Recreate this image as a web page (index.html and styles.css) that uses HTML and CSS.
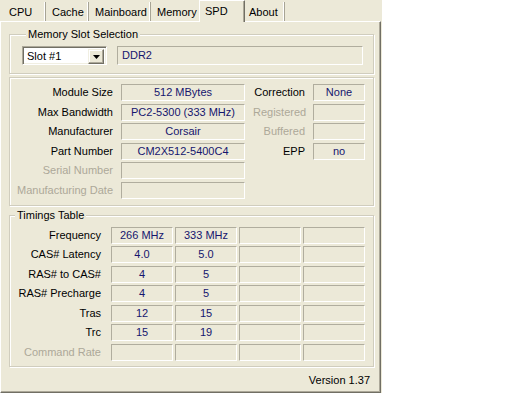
FILE: index.html
```html
<!DOCTYPE html>
<html>
<head>
<meta charset="utf-8">
<link rel="stylesheet" href="styles.css">
</head>
<body>
<div class="window">
  <div class="tabs">
    <div class="tab t-cpu">CPU</div>
    <div class="tab t-cache">Cache</div>
    <div class="tab t-main">Mainboard</div>
    <div class="tab t-mem">Memory</div>
    <div class="tab active t-spd">SPD</div>
    <div class="tab t-about">About</div>
  </div>
  <div class="panel">
    <fieldset class="group g-slot">
      <legend>Memory Slot Selection</legend>
      <div class="slot-row">
        <div class="combo">
          <span class="combo-text">Slot #1</span>
          <span class="combo-btn"><svg width="7" height="4" viewBox="0 0 7 4"><path d="M0 0H7L3.5 4Z" fill="#000"/></svg></span>
        </div>
        <div class="box type">DDR2</div>
      </div>
    </fieldset>

    <div class="group g-module">
      <div class="module-grid">
        <div class="lbl">Module Size</div><div class="box">512 MBytes</div>
        <div class="lbl">Correction</div><div class="box">None</div>

        <div class="lbl">Max Bandwidth</div><div class="box">PC2-5300 (333 MHz)</div>
        <div class="lbl dis">Registered</div><div class="box"></div>

        <div class="lbl">Manufacturer</div><div class="box">Corsair</div>
        <div class="lbl dis">Buffered</div><div class="box"></div>

        <div class="lbl">Part Number</div><div class="box">CM2X512-5400C4</div>
        <div class="lbl">EPP</div><div class="box">no</div>

        <div class="lbl dis">Serial Number</div><div class="box"></div>
        <div></div><div></div>

        <div class="lbl dis">Manufacturing Date</div><div class="box"></div>
        <div></div><div></div>
      </div>
    </div>

    <fieldset class="group g-timings">
      <legend>Timings Table</legend>
      <div class="timing-grid">
        <div class="lbl">Frequency</div><div class="box">266 MHz</div><div class="box">333 MHz</div><div class="box"></div><div class="box"></div>
        <div class="lbl">CAS# Latency</div><div class="box">4.0</div><div class="box">5.0</div><div class="box"></div><div class="box"></div>
        <div class="lbl">RAS# to CAS#</div><div class="box">4</div><div class="box">5</div><div class="box"></div><div class="box"></div>
        <div class="lbl">RAS# Precharge</div><div class="box">4</div><div class="box">5</div><div class="box"></div><div class="box"></div>
        <div class="lbl">Tras</div><div class="box">12</div><div class="box">15</div><div class="box"></div><div class="box"></div>
        <div class="lbl">Trc</div><div class="box">15</div><div class="box">19</div><div class="box"></div><div class="box"></div>
        <div class="lbl dis">Command Rate</div><div class="box"></div><div class="box"></div><div class="box"></div><div class="box"></div>
      </div>
    </fieldset>

    <div class="version">Version 1.37</div>
  </div>
</div>
</body>
</html>
```

FILE: styles.css
```css
* { box-sizing: border-box; }
html, body { margin: 0; padding: 0; background: #fff; }
body {
  font-family: "Liberation Sans", Arial, sans-serif;
  font-size: 11px;
  color: #000;
}
.window {
  width: 382px;
  height: 393px;
  background: #ECE9D8;
  display: flex;
  flex-direction: column;
}
.tabs {
  display: flex;
  align-items: flex-end;
  height: 21px;
}
.tab {
  height: 19px;
  line-height: 19px;
  padding-top: 1px;
  border-right: 1px solid #A7A495;
  box-shadow: inset -1px 0 0 #fff;
  white-space: nowrap;
}
.tab.active {
  height: 22px;
  line-height: 20px;
  padding-top: 0;
  margin-bottom: -1px;
  border-left: 1px solid #fff;
  border-top: 1px solid #fff;
  border-right: 1px solid #716F64;
  box-shadow: inset -1px 0 0 #ACA899;
  background: #ECE9D8;
  position: relative;
  z-index: 1;
}
.t-cpu { width: 46px; padding-left: 9px; }
.t-cache { width: 43px; padding-left: 6px; }
.t-main { width: 62px; padding-left: 6px; }
.t-mem { width: 48px; padding-left: 6px; border-right: 0; box-shadow: none; }
.t-spd { width: 46px; padding-left: 5px; }
.t-about { width: 40px; padding-left: 4px; }

.panel {
  width: 381px;
  flex: 1;
  border-top: 1px solid #fff;
  border-left: 1px solid #fff;
  border-right: 1px solid #716F64;
  border-bottom: 1px solid #716F64;
  box-shadow: inset -1px -1px 0 #ACA899;
  padding: 6px 0 0 8px;
  display: flex;
  flex-direction: column;
}
.group {
  width: 365px;
  margin: 0;
  min-width: 0;
  border: 1px solid #D0CDBE;
  box-shadow: inset 1px 1px 0 #fff, 1px 1px 0 #fff;
}
legend {
  margin-left: 4px;
  padding: 0 2px;
  line-height: 13px;
  background: #ECE9D8;
}
.g-slot { padding: 5px 10px 8px 12px; }
.slot-row { display: flex; gap: 10px; }
.combo {
  width: 85px;
  height: 19px;
  background: #fff;
  border-top: 1px solid #ACA899;
  border-left: 1px solid #ACA899;
  border-right: 1px solid #fff;
  border-bottom: 1px solid #fff;
  box-shadow: inset 1px 1px 0 #716F64, inset -1px -1px 0 #F1EFE2;
  display: flex;
  padding: 2px 2px 2px 4px;
}
.combo-text { flex: 1; line-height: 15px; }
.combo-btn {
  width: 16px;
  height: 15px;
  background: #ECE9D8;
  border-top: 1px solid #F1EFE2;
  border-left: 1px solid #F1EFE2;
  border-right: 1px solid #716F64;
  border-bottom: 1px solid #716F64;
  box-shadow: inset -1px -1px 0 #ACA899, inset 1px 1px 0 #fff;
  display: flex;
  align-items: center;
  justify-content: center;
}
.combo-btn svg { display: block; }

.box {
  height: 17px;
  line-height: 15px;
  border-top: 1px solid #B0AD9E;
  border-left: 1px solid #B0AD9E;
  border-right: 1px solid #fff;
  border-bottom: 1px solid #fff;
  color: #15156E;
  text-align: center;
  white-space: nowrap;
  overflow: hidden;
}
.box.type {
  width: 246px;
  height: 19px;
  line-height: 17px;
  text-align: left;
  padding-left: 4px;
}
.lbl {
  text-align: right;
  line-height: 17px;
  white-space: nowrap;
}
.lbl.dis { color: #ACA899; }

.g-module {
  margin-top: 3px;
  padding: 6px 0 6px 1px;
}
.module-grid {
  display: grid;
  grid-template-columns: 102px 124px 52px 52px;
  grid-auto-rows: 17px;
  column-gap: 8px;
  row-gap: 2.5px;
}

.g-timings {
  margin-top: 3px;
  padding: 5px 0 5px 1px;
}
.timing-grid {
  display: grid;
  grid-template-columns: 98px 62px 62px 62px 62px;
  grid-auto-rows: 17px;
  column-gap: 2px;
  row-gap: 2.5px;
}
.timing-grid .lbl { margin-right: 8px; }

.version {
  margin-top: 7px;
  width: 361px;
  text-align: right;
  line-height: 13px;
}
```
